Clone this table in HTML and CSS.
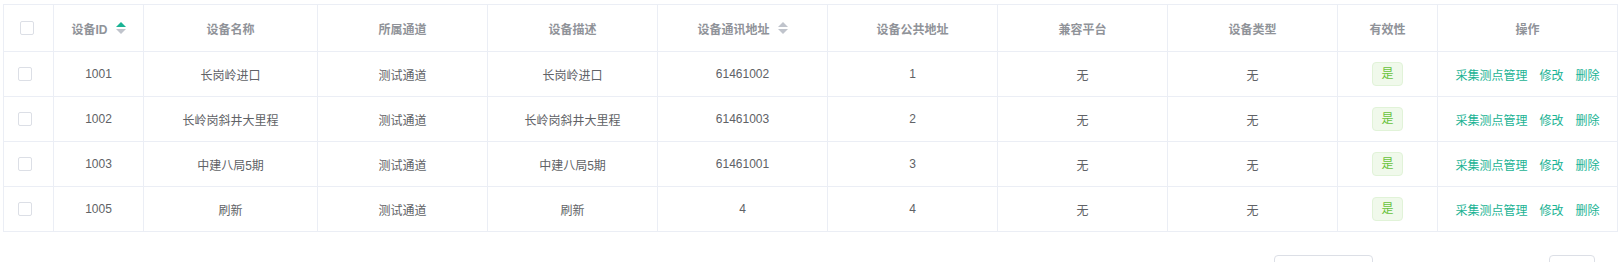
FILE: index.html
```html
<!DOCTYPE html>
<html lang="zh-CN">
<head>
<meta charset="utf-8">
<link rel="stylesheet" href="styles.css">
</head>
<body>
<div class="page">
  <table class="grid">
    <colgroup>
      <col class="c-check"><col class="c-id"><col class="c-name"><col class="c-w"><col class="c-w"><col class="c-w"><col class="c-w"><col class="c-w"><col class="c-w"><col class="c-valid"><col class="c-ops">
    </colgroup>
    <thead>
      <tr>
        <th><span class="cb cb-head"></span></th>
        <th><span class="sortable">设备ID<span class="caret"><i class="up active"></i><i class="down"></i></span></span></th>
        <th>设备名称</th>
        <th>所属通道</th>
        <th>设备描述</th>
        <th><span class="sortable">设备通讯地址<span class="caret"><i class="up"></i><i class="down"></i></span></span></th>
        <th>设备公共地址</th>
        <th>兼容平台</th>
        <th>设备类型</th>
        <th>有效性</th>
        <th>操作</th>
      </tr>
    </thead>
    <tbody>
      <tr>
        <td><span class="cb"></span></td>
        <td>1001</td>
        <td>长岗岭进口</td>
        <td>测试通道</td>
        <td>长岗岭进口</td>
        <td>61461002</td>
        <td>1</td>
        <td>无</td>
        <td>无</td>
        <td><span class="tag">是</span></td>
        <td class="ops"><a>采集测点管理</a><a>修改</a><a>删除</a></td>
      </tr>
      <tr>
        <td><span class="cb"></span></td>
        <td>1002</td>
        <td>长岭岗斜井大里程</td>
        <td>测试通道</td>
        <td>长岭岗斜井大里程</td>
        <td>61461003</td>
        <td>2</td>
        <td>无</td>
        <td>无</td>
        <td><span class="tag">是</span></td>
        <td class="ops"><a>采集测点管理</a><a>修改</a><a>删除</a></td>
      </tr>
      <tr>
        <td><span class="cb"></span></td>
        <td>1003</td>
        <td>中建八局5期</td>
        <td>测试通道</td>
        <td>中建八局5期</td>
        <td>61461001</td>
        <td>3</td>
        <td>无</td>
        <td>无</td>
        <td><span class="tag">是</span></td>
        <td class="ops"><a>采集测点管理</a><a>修改</a><a>删除</a></td>
      </tr>
      <tr>
        <td><span class="cb"></span></td>
        <td>1005</td>
        <td>刷新</td>
        <td>测试通道</td>
        <td>刷新</td>
        <td>4</td>
        <td>4</td>
        <td>无</td>
        <td>无</td>
        <td><span class="tag">是</span></td>
        <td class="ops"><a>采集测点管理</a><a>修改</a><a>删除</a></td>
      </tr>
    </tbody>
  </table>
  <div class="pager">
    <span class="total">共 4 条</span>
    <span class="select">10条/页</span>
    <span class="btn">&lsaquo;</span>
    <span class="num">1</span>
    <span class="btn">&rsaquo;</span>
    <span class="jump">前往</span>
    <span class="jump-input">1</span>
    <span class="jump">页</span>
  </div>
</div>
</body>
</html>
```

FILE: styles.css
```css
html, body {
  margin: 0;
  padding: 0;
  background: #fff;
}

.page {
  padding: 4px 6px 0 3px;
  font-family: "Liberation Sans", "Noto Sans CJK SC", sans-serif;
  font-size: 12px;
  color: #606266;
}

.grid {
  width: 1615px;
  table-layout: fixed;
  border-collapse: collapse;
  border: 1px solid #ebeef5;
}

.c-check { width: 50px; }
.c-id { width: 90px; }
.c-name { width: 174px; }
.c-w { width: 170px; }
.c-valid { width: 100px; }
.c-ops { width: 180px; }

.grid th,
.grid td {
  border: 1px solid #ebeef5;
  text-align: center;
  padding: 0;
  white-space: nowrap;
}

.grid th {
  height: 46px;
  color: #909399;
  font-weight: bold;
}

.grid td {
  height: 44px;
}

.cb {
  display: inline-block;
  width: 12px;
  height: 12px;
  border: 1px solid #dcdfe6;
  border-radius: 2px;
  background: #fff;
  vertical-align: middle;
  position: relative;
  left: -4px;
}

.cb-head {
  left: -2px;
}

.sortable {
  display: inline-flex;
  align-items: center;
}

.caret {
  display: inline-flex;
  flex-direction: column;
  margin-left: 8px;
  gap: 2px;
}

.caret i {
  width: 0;
  height: 0;
  border-left: 5px solid transparent;
  border-right: 5px solid transparent;
}

.caret .up {
  border-bottom: 5px solid #c0c4cc;
}

.caret .down {
  border-top: 5px solid #c0c4cc;
}

.caret .up.active {
  border-bottom-color: #1ab394;
}

.tag {
  display: inline-block;
  height: 22px;
  line-height: 22px;
  padding: 0 8px;
  border: 1px solid #e1f3d8;
  border-radius: 4px;
  background: #f0f9eb;
  color: #67c23a;
  font-size: 12px;
}

.ops a {
  color: #1ab394;
  margin-left: 12px;
}

.ops a:first-child {
  margin-left: 0;
}

.pager {
  display: flex;
  justify-content: flex-end;
  align-items: center;
  margin-top: 23px;
  padding-right: 1px;
  font-size: 13px;
  color: #606266;
  height: 28px;
}

.total {
  margin-right: 20px;
}

.select {
  box-sizing: border-box;
  width: 99px;
  height: 28px;
  line-height: 26px;
  border: 1px solid #dcdfe6;
  border-radius: 4px;
  padding-left: 10px;
  margin-right: 34px;
}

.btn,
.num {
  width: 30px;
  text-align: center;
  line-height: 28px;
}

.btn {
  color: #c0c4cc;
  font-size: 16px;
}

.num {
  color: #1ab394;
  font-weight: bold;
  margin: 0 6px;
}

.jump {
  margin-left: 8px;
}

.jump + .jump-input {
  margin-left: 6px;
}

.jump-input {
  box-sizing: border-box;
  width: 46px;
  height: 28px;
  line-height: 26px;
  border: 1px solid #dcdfe6;
  border-radius: 4px;
  text-align: center;
}
```
